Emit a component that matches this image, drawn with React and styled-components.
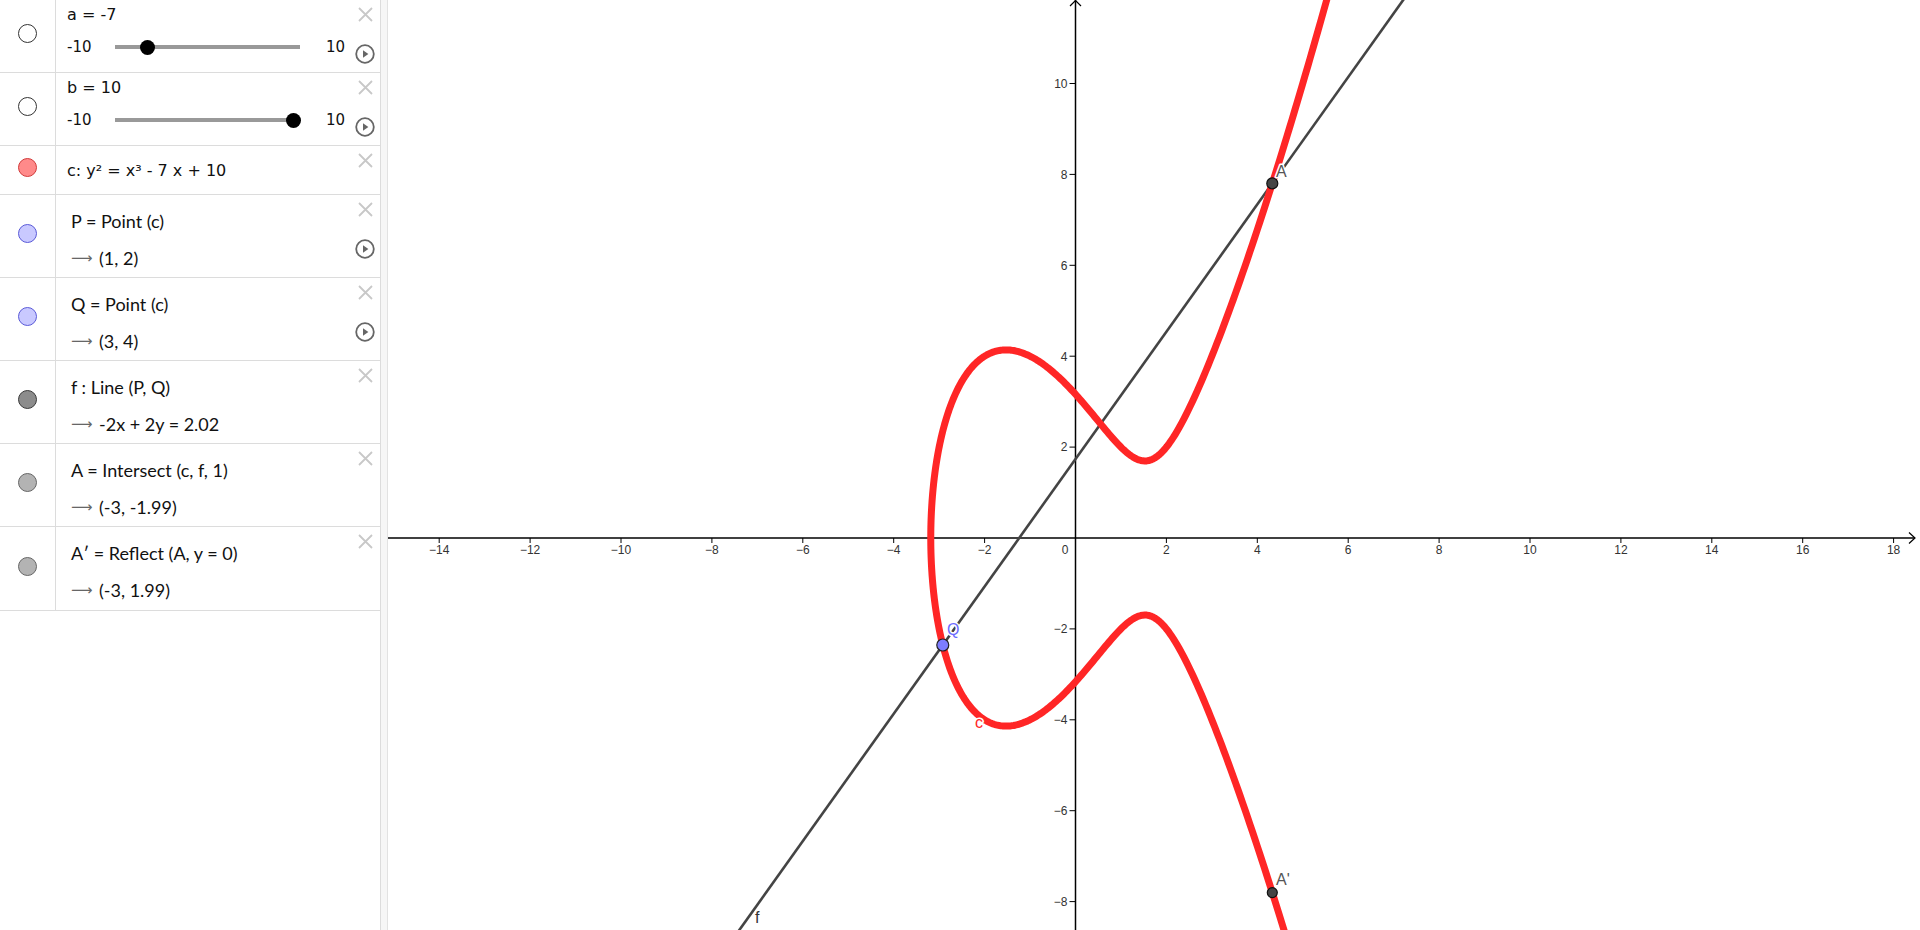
import React from 'react';
import styled, { createGlobalStyle } from 'styled-components';

const GlobalStyle = createGlobalStyle`
  html, body { margin: 0; padding: 0; overflow: hidden; background: #fff; }
  body { font-family: "DejaVu Sans", sans-serif; color: #222; }
`;

// graph mapping (page pixels)
const X0 = 1075.5;
const Y0 = 538;
const S = 45.45;
const px = (x) => X0 + x * S;
const py = (y) => Y0 - y * S;
const cubic = (x) => x * x * x - 7 * x + 10;

const findRoot = () => {
  let lo = -4, hi = -3;
  for (let i = 0; i < 60; i++) {
    const mid = (lo + hi) / 2;
    if (cubic(mid) > 0) hi = mid; else lo = mid;
  }
  return (lo + hi) / 2;
};

const curvePath = () => {
  const r = findRoot();
  const upper = [];
  const lower = [];
  for (let u = 0; u <= 3.2; u += 0.01) {
    const x = r + u * u;
    const y = Math.sqrt(Math.max(0, cubic(x)));
    upper.push([px(x), py(y)]);
    lower.push([px(x), py(-y)]);
  }
  const pts = [...lower.reverse(), ...upper.slice(1)];
  return 'M' + pts.map(([a, b]) => `${a.toFixed(2)},${b.toFixed(2)}`).join('L');
};

const xQ = -2.92;
const yQ = -Math.sqrt(cubic(xQ));
const xA = 4.33;
const yA = Math.sqrt(cubic(xA));
const slope = (yA - yQ) / (xA - xQ);
const lineY = (x) => yQ + slope * (x - xQ);

const rows = [
  { kind: 'slider', name: 'a = -7', value: -7, h: 73 },
  { kind: 'slider', name: 'b = 10', value: 10, h: 73 },
  { kind: 'plain', text: 'c: y² = x³ - 7 x + 10', h: 49, fill: '#ff8a8a', stroke: '#d23a3a' },
  { kind: 'math', text: 'P = Point (c)', out: '(1, 2)', h: 83, fill: '#c9c9ff', stroke: '#5a5ad8', play: true },
  { kind: 'math', text: 'Q = Point (c)', out: '(3, 4)', h: 83, fill: '#c9c9ff', stroke: '#5a5ad8', play: true },
  { kind: 'math', text: 'f : Line (P, Q)', out: '-2x + 2y = 2.02', h: 83, fill: '#8c8c8c', stroke: '#3a3a3a' },
  { kind: 'math', text: 'A = Intersect (c, f, 1)', out: '(-3, -1.99)', h: 83, fill: '#b3b3b3', stroke: '#666' },
  { kind: 'math', text: 'A′ = Reflect (A, y = 0)', out: '(-3, 1.99)', h: 84, fill: '#b3b3b3', stroke: '#666' },
];

const Layout = styled.div`
  display: flex;
  width: 1920px;
  height: 930px;
`;

const AlgebraPanel = styled.div`
  width: 380px;
  flex-shrink: 0;
  border-right: 1px solid #dcdcdc;
  display: flex;
  flex-direction: column;
  background: #fff;
`;

const Splitter = styled.div`
  width: 6px;
  flex-shrink: 0;
  background: #f6f6f6;
  border-right: 1px solid #e2e2e2;
`;

const GraphView = styled.div`
  flex: 1;
  background: #fff;
  svg { display: block; }
`;

const Row = styled.div`
  display: grid;
  grid-template-columns: 56px 1fr 30px;
  height: ${(p) => p.$h}px;
  box-sizing: border-box;
  border-bottom: 1px solid #dcdcdc;
`;

const MarbleCell = styled.div`
  display: flex;
  align-items: center;
  justify-content: center;
  border-right: 1px solid #dcdcdc;
  padding-bottom: 5px;
`;

const Marble = styled.div`
  width: 17px;
  height: 17px;
  border-radius: 50%;
  background: ${(p) => p.$fill};
  border: 1px solid ${(p) => p.$stroke};
`;

const Content = styled.div`
  display: flex;
  flex-direction: column;
  justify-content: ${(p) => (p.$center ? 'center' : 'flex-start')};
  padding-left: ${(p) => p.$pad}px;
  padding-top: ${(p) => p.$top}px;
  min-width: 0;
`;

const Title = styled.div`
  font-family: "DejaVu Sans", sans-serif;
  font-size: 16px;
  line-height: 20px;
  color: #111;
  white-space: nowrap;
`;

const SliderLine = styled.div`
  display: grid;
  grid-template-columns: 22px 185px auto;
  column-gap: 26px;
  align-items: center;
  height: 20px;
  margin-top: 12px;
  font-family: "DejaVu Sans", sans-serif;
  font-size: 15px;
  color: #111;
`;

const Track = styled.div`
  position: relative;
  height: 4px;
  background: #999;
`;

const Knob = styled.div`
  position: absolute;
  top: -5.5px;
  width: 15px;
  height: 15px;
  margin-left: -7.5px;
  border-radius: 50%;
  background: #000;
`;

const MathLine = styled.div`
  font-family: "Lato", "DejaVu Sans", sans-serif;
  font-size: 18px;
  line-height: 24px;
  color: #111;
  white-space: nowrap;
  margin-top: ${(p) => p.$gap || 0}px;
  display: flex;
  align-items: center;
`;

const Arrow = styled.span`
  font-family: "DejaVu Sans", sans-serif;
  color: #666;
  font-size: 15px;
  width: 28px;
`;

const Controls = styled.div`
  display: flex;
  flex-direction: column;
  align-items: center;
  padding-top: 7px;
  gap: 22px;
`;

const CloseIcon = () => (
  <svg width="15" height="15" viewBox="0 0 15 15">
    <path d="M1 1L14 14M14 1L1 14" stroke="#c8c8c8" strokeWidth="1.8" fill="none" />
  </svg>
);

const PlayIcon = () => (
  <svg width="20" height="20" viewBox="0 0 20 20">
    <circle cx="10" cy="10" r="8.8" stroke="#666" strokeWidth="1.8" fill="none" />
    <path d="M8 6.2L13.4 10L8 13.8Z" fill="#666" />
  </svg>
);

const SliderRow = ({ row }) => {
  const frac = (row.value + 10) / 20;
  return (
    <Row $h={row.h}>
      <MarbleCell>
        <Marble $fill="#fff" $stroke="#333" />
      </MarbleCell>
      <Content $pad={11} $top={5}>
        <Title>{row.name}</Title>
        <SliderLine>
          <span>-10</span>
          <Track>
            <Knob style={{ left: `${7 + frac * 171}px` }} />
          </Track>
          <span>10</span>
        </SliderLine>
      </Content>
      <Controls>
        <CloseIcon />
        <PlayIcon />
      </Controls>
    </Row>
  );
};

const ItemRow = ({ row }) => (
  <Row $h={row.h}>
    <MarbleCell>
      <Marble $fill={row.fill} $stroke={row.stroke} />
    </MarbleCell>
    {row.kind === 'plain' ? (
      <Content $pad={11} $top={2} $center>
        <Title>{row.text}</Title>
      </Content>
    ) : (
      <Content $pad={15} $top={14}>
        <MathLine>{row.text}</MathLine>
        <MathLine $gap={13}>
          <Arrow>⟶</Arrow>
          {row.out}
        </MathLine>
      </Content>
    )}
    <Controls>
      <CloseIcon />
      {row.play && <PlayIcon />}
    </Controls>
  </Row>
);

const xTicks = [];
for (let v = -14; v <= 18; v += 2) if (v !== 0) xTicks.push(v);
const yTicks = [10, 8, 6, 4, 2, -2, -4, -6, -8];
const fmt = (v) => (v < 0 ? `\u2212${-v}` : `${v}`);

const Graph = () => {
  const d = curvePath();
  const lx1 = (py(-9) - Y0) ;
  const left = -10, right = 10;
  return (
    <svg width="1532" height="930" viewBox="388 0 1532 930">
      {/* axes */}
      <line x1="388" y1={Y0} x2="1915" y2={Y0} stroke="#000" strokeWidth="1.5" />
      <path d={`M1909 ${Y0 - 5.5}L1915 ${Y0}L1909 ${Y0 + 5.5}`} stroke="#000" strokeWidth="1.2" fill="none" />
      <line x1={X0} y1="0" x2={X0} y2="930" stroke="#000" strokeWidth="1.5" />
      <path d={`M${X0 - 5.5} 6L${X0} 0.5L${X0 + 5.5} 6`} stroke="#000" strokeWidth="1.2" fill="none" />
      {xTicks.map((v) => (
        <g key={`x${v}`}>
          <line x1={px(v)} y1={Y0} x2={px(v)} y2={Y0 + 5} stroke="#000" strokeWidth="1" />
          <text x={px(v)} y={Y0 + 16} textAnchor="middle" fontFamily="Liberation Sans, Arial, sans-serif" fontSize="12" fill="#333">
            {fmt(v)}
          </text>
        </g>
      ))}
      <text x={X0 - 7} y={Y0 + 16} textAnchor="end" fontFamily="Liberation Sans, Arial, sans-serif" fontSize="12" fill="#333">0</text>
      {yTicks.map((v) => (
        <g key={`y${v}`}>
          <line x1={X0 - 6} y1={py(v)} x2={X0} y2={py(v)} stroke="#000" strokeWidth="1" />
          <text x={X0 - 8} y={py(v) + 4.3} textAnchor="end" fontFamily="Liberation Sans, Arial, sans-serif" fontSize="12" fill="#333">
            {fmt(v)}
          </text>
        </g>
      ))}
      {/* line f */}
      <line x1={px(left)} y1={py(lineY(left))} x2={px(right)} y2={py(lineY(right))} stroke="#444" strokeWidth="2.6" />
      {/* curve c */}
      <path d={d} stroke="#ff2626" strokeWidth="7" fill="none" strokeLinejoin="round" />
      {/* points */}
      <circle cx={px(xQ)} cy={py(yQ)} r="6" fill="#7d7dff" stroke="#222" strokeWidth="1.2" />
      <circle cx={px(xA)} cy={py(yA)} r="5.5" fill="#444" stroke="#111" strokeWidth="1.2" />
      <circle cx={px(xA)} cy={py(-yA)} r="5" fill="#444" stroke="#111" strokeWidth="1.2" />
      {/* labels */}
      <g fontFamily="Liberation Sans, Arial, sans-serif" fontSize="16" stroke="#fff" strokeWidth="3" paintOrder="stroke" strokeLinejoin="round">
        <text x="947" y="635" fill="#6b6bff">Q</text>
        <text x="1276" y="177" fill="#555">A</text>
        <text x="1276" y="885" fill="#555">A'</text>
        <text x="975" y="728" fill="#ff2626">c</text>
        <text x="755" y="923" fill="#333">f</text>
      </g>
    </svg>
  );
};

export default function App() {
  return (
    <>
      <GlobalStyle />
      <Layout>
        <AlgebraPanel>
          {rows.map((row, i) =>
            row.kind === 'slider' ? <SliderRow key={i} row={row} /> : <ItemRow key={i} row={row} />
          )}
        </AlgebraPanel>
        <Splitter />
        <GraphView>
          <Graph />
        </GraphView>
      </Layout>
    </>
  );
}
